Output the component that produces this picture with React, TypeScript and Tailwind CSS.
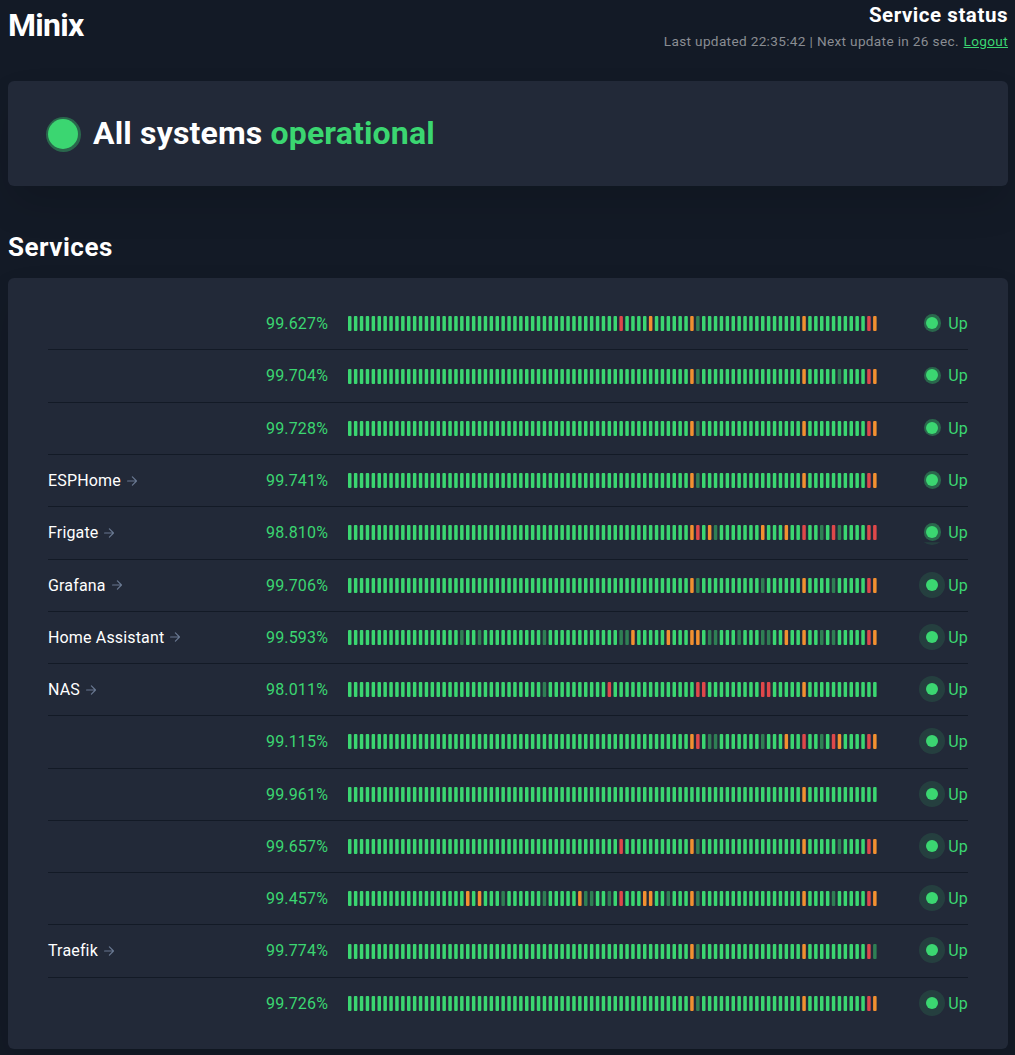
type Service = { name?: string; uptime: string; marks: string };

const services: Service[] = [
  { uptime: "99.627", marks: "r46 o51 o58 d59 o77 r88 o89" },
  { uptime: "99.704", marks: "o58 d59 o77 d83 r88 o89" },
  { uptime: "99.728", marks: "o58 d59 o77 r88 o89" },
  { name: "ESPHome", uptime: "99.741", marks: "o58 d59 o77 r88 o89" },
  { name: "Frigate", uptime: "98.810", marks: "o58 r59 o61 d62 o70 o74 r77 d80 r82 d83 r88 r89" },
  { name: "Grafana", uptime: "99.706", marks: "o58 d59 d70 o77 d82 r88 o89" },
  { name: "Home Assistant", uptime: "99.593", marks: "d19 d22 d33 d46 d47 o48 o54 o58 o59 d61 d62 d66 d70 d71 o74 o77 d80 d82 r88 o89" },
  { name: "NAS", uptime: "98.011", marks: "d33 r44 r59 r60 r70 r71 o77" },
  { uptime: "99.115", marks: "o58 r59 d61 d62 d70 o74 r77 d80 r82 o83 r88 o89" },
  { uptime: "99.961", marks: "o77" },
  { uptime: "99.657", marks: "r46 o58 d59 o77 d83 r88 o89" },
  { uptime: "99.457", marks: "o20 o22 d26 d33 o39 d40 d41 d44 r46 o50 o51 d54 o58 d59 o77 d82 r88 o89" },
  { name: "Traefik", uptime: "99.774", marks: "o58 d59 o77 r88 d89" },
  { uptime: "99.726", marks: "o58 d59 o77 r88 o89" },
];

const colors: Record<string, string> = { r: "#df484a", o: "#f29030", d: "#2f7f54" };

function UptimeChart({ marks }: { marks: string }) {
  const byDay: Record<number, string> = {};
  marks.split(" ").forEach((m) => (byDay[Number(m.slice(1))] = colors[m[0]]));
  return (
    <svg className="mb-[0.04px] block h-[15px] w-[529px] shrink-0" viewBox="0 0 529 15">
      {Array.from({ length: 90 }, (_, i) => (
        <rect key={i} x={i * 5.9} y={0} width={3.5} height={15} rx={1} fill={byDay[i] ?? "#3bd671"} />
      ))}
    </svg>
  );
}

function Arrow() {
  return (
    <svg className="ml-1.5 size-[10px]" viewBox="0 0 10 10" fill="none" stroke="#687790" strokeWidth="1.2" strokeLinecap="round" strokeLinejoin="round">
      <path d="M0.6 5H9.3M5.4 0.9L9.5 5L5.4 9.1" />
    </svg>
  );
}

function Pulse({ index }: { index: number }) {
  return (
    <span className="relative mb-[1.28px] block size-3">
      {index < 5 && <span className="absolute -inset-[2.8px] rounded-full bg-[#3bd671]/36" />}
      {index > 4 && <span className="absolute -inset-[7px] rounded-full bg-[#3bd671]/13" />}
      {index === 4 && (
        <span className="absolute -inset-[7px] rounded-full bg-[#3bd671]/13 [clip-path:inset(23px_0_0_0)]" />
      )}
      <span className="absolute inset-0 rounded-full bg-[#3bd671]" />
    </span>
  );
}

export default function App() {
  return (
    <div className="h-[1055px] overflow-hidden bg-[#131a26] px-2 pr-[7px] font-[Roboto,sans-serif] text-base tracking-[0.16px] text-white">
      <header className="flex h-[81px] justify-between">
        <h1 className="pt-[7px] text-[32px] leading-9 font-bold tracking-[-0.75px]">Minix</h1>
        <div className="text-right">
          <h2 className="pt-[3px] text-[20.5px] leading-6 font-bold tracking-[0.55px]">Service status</h2>
          <p className="mt-1 text-[13.6px] leading-5 tracking-[0.34px] text-[#8a8d93]">
            Last updated 22:35:42 | Next update in 26 sec.{" "}
            <a className="ml-px text-[#3bd671] underline">Logout</a>
          </p>
        </div>
      </header>

      <section className="flex h-[105px] items-center rounded-md bg-[#222938] pl-10 shadow-[0_20px_40px_-5px_rgba(0,0,0,0.15)]">
        <span className="relative mt-px block size-[30px]">
          <span className="absolute -inset-[2.5px] rounded-full bg-[#3bd671]/36" />
          <span className="absolute inset-0 rounded-full bg-[#3bd671]" />
        </span>
        <h2 className="mb-0.5 ml-[15px] text-[32px] leading-10 font-bold">
          All systems <span className="text-[#3bd671]">operational</span>
        </h2>
      </section>

      <h3 className="mt-[45px] h-[47px] text-[26px] leading-8 font-bold tracking-[0.5px]">Services</h3>

      <section className="rounded-md bg-[#222938] px-10 pt-[20.11px] pb-5 shadow-[0_20px_40px_-5px_rgba(0,0,0,0.15)]">
        {services.map((s, i) => (
          <div key={i} className="flex h-[52.2813px] items-center border-b border-[#131a26] last:h-[51.2813px] last:border-b-0">
            <div className="flex w-[218px] items-center">
              {s.name && (
                <>
                  <span className="pt-[0.72px]">{s.name}</span>
                  <Arrow />
                </>
              )}
            </div>
            <div className="w-[82px] pt-[0.72px] text-[#3bd671]">{s.uptime}%</div>
            <UptimeChart marks={s.marks} />
            <div className="ml-auto flex items-center gap-2.5 text-[#3bd671]">
              <Pulse index={i} />
              <span className="pt-[0.72px]">Up</span>
            </div>
          </div>
        ))}
      </section>
    </div>
  );
}
